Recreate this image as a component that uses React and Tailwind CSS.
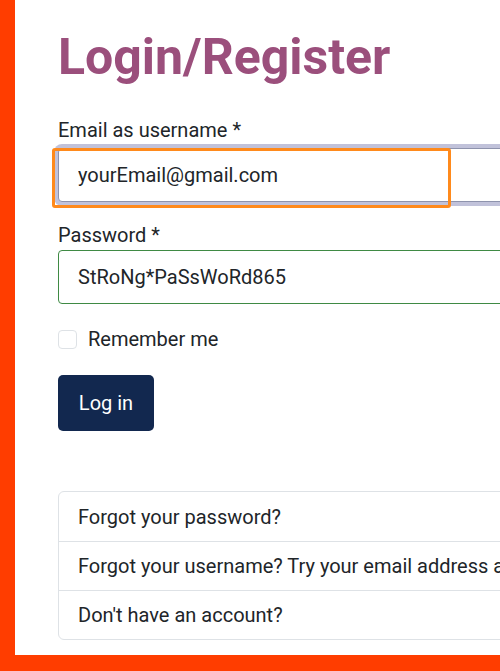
import { useState } from "react";

const links = [
  "Forgot your password?",
  "Forgot your username? Try your email address as username.",
  "Don't have an account?",
];

const App = () => {
  const [email, setEmail] = useState("yourEmail@gmail.com");
  const [password, setPassword] = useState("StRoNg*PaSsWoRd865");
  const [remember, setRemember] = useState(false);

  return (
    <div className="w-[500px] h-[671px] overflow-hidden bg-[#ff3d00] pl-[15px] pb-[16px] font-['Roboto',sans-serif] text-[#212529]">
      <div className="h-full bg-white pl-[43px] pt-[27px]">
        <div className="w-[560px]">
          <h1 className="text-[50px] leading-[60px] font-bold text-[#9b4f7c] mb-[29px]">
            Login/Register
          </h1>

          {/* Email */}
          <label htmlFor="email" className="block text-[20px] leading-[29px] mb-[3px]">
            Email as username *
          </label>
          <div className="relative mb-[19px]">
            <input
              id="email"
              type="text"
              value={email}
              onChange={(e) => setEmail(e.target.value)}
              className="block w-full h-[54px] px-[19px] text-[20px] bg-white border border-[#8e93ad] rounded-[4px] shadow-[0_0_0_4px_#c1c2da] outline-none"
            />
            <div className="absolute left-[-6px] top-0 w-[399px] h-[60px] border-[3px] border-[#ff8a1c] rounded-[3px] pointer-events-none" />
          </div>

          {/* Password */}
          <label htmlFor="password" className="block text-[20px] leading-[29px]">
            Password *
          </label>
          <input
            id="password"
            type="text"
            value={password}
            onChange={(e) => setPassword(e.target.value)}
            className="block w-full h-[54px] px-[19px] text-[20px] bg-white border border-[#3f8a44] rounded-[4px] outline-none"
          />

          {/* Remember me */}
          <label className="flex items-center gap-[11px] mt-[20px] text-[20px] leading-[30px] cursor-pointer">
            <input
              type="checkbox"
              checked={remember}
              onChange={(e) => setRemember(e.target.checked)}
              className="appearance-none w-[19px] h-[19px] border border-[#dee2e6] rounded-[4px] bg-white"
            />
            Remember me
          </label>

          <button
            type="submit"
            className="mt-[21px] w-[96px] h-[56px] bg-[#12284f] text-white text-[20px] rounded-[5px]"
          >
            Log in
          </button>

          {/* Links */}
          <ul className="mt-[60px] border border-[#dee2e6] rounded-[6px]">
            {links.map((text, i) => (
              <li
                key={text}
                className={`h-[49px] flex items-center px-[19px] text-[20px] whitespace-nowrap ${
                  i > 0 ? "border-t border-[#dee2e6]" : ""
                }`}
              >
                {text}
              </li>
            ))}
          </ul>
        </div>
      </div>
    </div>
  );
};

export default App;
